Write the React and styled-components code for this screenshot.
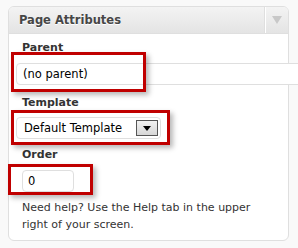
import styled, { createGlobalStyle } from "styled-components"

const Global = createGlobalStyle`
    html, body {
        margin: 0;
        padding: 0;
        background: #f9f9f9;
    }
    body {
        font-family: "DejaVu Sans", Verdana, sans-serif;
        color: #333;
    }
`

const Page = styled.div`
    position: relative;
    width: 298px;
    height: 248px;
    overflow: hidden;
    padding: 6px 0 0 8px;
    box-sizing: border-box;
`

const Box = styled.div`
    width: 281px;
    height: 235px;
    box-sizing: border-box;
    background: #fff;
    border: 1px solid #dfdfdf;
    border-radius: 6px;
`

const Header = styled.div`
    display: flex;
    height: 26px;
    border-bottom: 1px solid #dfdfdf;
    background: linear-gradient(to bottom, #f3f3f3, #e4e4e4);
    border-radius: 5px 5px 0 0;
`

const Title = styled.h3`
    flex: 1;
    margin: 0;
    padding: 0 0 0 10px;
    font-size: 11.5px;
    font-weight: bold;
    line-height: 26px;
    color: #464646;
    text-shadow: 0 1px 0 #fff;
`

const Toggle = styled.div`
    width: 22px;
    display: flex;
    align-items: center;
    justify-content: center;
    border-left: 1px solid #fff;
    box-shadow: -1px 0 0 #dfdfdf;
`

const Inside = styled.div`
    padding: 6px 0 0 7px;
`

const Label = styled.p`
    margin: ${p => p.$top || 0}px 0 0 6px;
    font-size: 11px;
    font-weight: bold;
    line-height: 15px;
    color: #333;
`

const Field = styled.div`
    box-sizing: border-box;
    width: ${p => p.$w}px;
    height: 22px;
    margin-top: ${p => p.$top}px;
    margin-left: ${p => p.$left || 0}px;
    display: flex;
    align-items: center;
    padding-left: ${p => p.$pad || 7}px;
    padding-right: 2px;
    background: #fff;
    border: 1px solid #dfdfdf;
    border-radius: 4px;
    font-size: 11.5px;
    color: #000;
`

const FieldText = styled.span`
    flex: 1;
`

const Arrow = styled.div`
    width: 22px;
    height: 16px;
    box-sizing: border-box;
    border: 1px solid #555;
    background: linear-gradient(to bottom, #f2f2f2, #d6d6d6);
    display: flex;
    align-items: center;
    justify-content: center;
`

const Help = styled.p`
    width: 245px;
    margin: 7px 0 0 6px;
    font-size: 11px;
    line-height: 17px;
    color: #333;
`

const Mark = styled.div`
    position: absolute;
    box-sizing: border-box;
    border: 3px solid #c00000;
    box-shadow: 3px 3px 5px rgba(0, 0, 0, 0.28);
`

function App() {
    return (
        <>
            <Global />
            <Page>
                <Box>
                    <Header>
                        <Title>Page Attributes</Title>
                        <Toggle>
                            <svg width="10" height="8" viewBox="0 0 10 8">
                                <path d="M0 0 H10 L5 8 Z" fill="#c8c8c8" />
                            </svg>
                        </Toggle>
                    </Header>
                    <Inside>
                        <Label>Parent</Label>
                        <Field $w={290} $top={8} $pad={6}>
                            <FieldText>(no parent)</FieldText>
                        </Field>
                        <Label $top={10}>Template</Label>
                        <Field $w={145} $top={7}>
                            <FieldText>Default Template</FieldText>
                            <Arrow>
                                <svg width="8" height="5" viewBox="0 0 8 5">
                                    <path d="M0 0 H8 L4 5 Z" fill="#000" />
                                </svg>
                            </Arrow>
                        </Field>
                        <Label $top={8}>Order</Label>
                        <Field $w={52} $top={8} $left={6} $pad={5}>
                            <FieldText>0</FieldText>
                        </Field>
                        <Help>Need help? Use the Help tab in the upper right of your screen.</Help>
                    </Inside>
                </Box>
                <Mark style={{ left: 11, top: 52, width: 135, height: 40 }} />
                <Mark style={{ left: 11, top: 110, width: 159, height: 35 }} />
                <Mark style={{ left: 8, top: 164, width: 85, height: 31 }} />
            </Page>
        </>
    )
}

export default App
